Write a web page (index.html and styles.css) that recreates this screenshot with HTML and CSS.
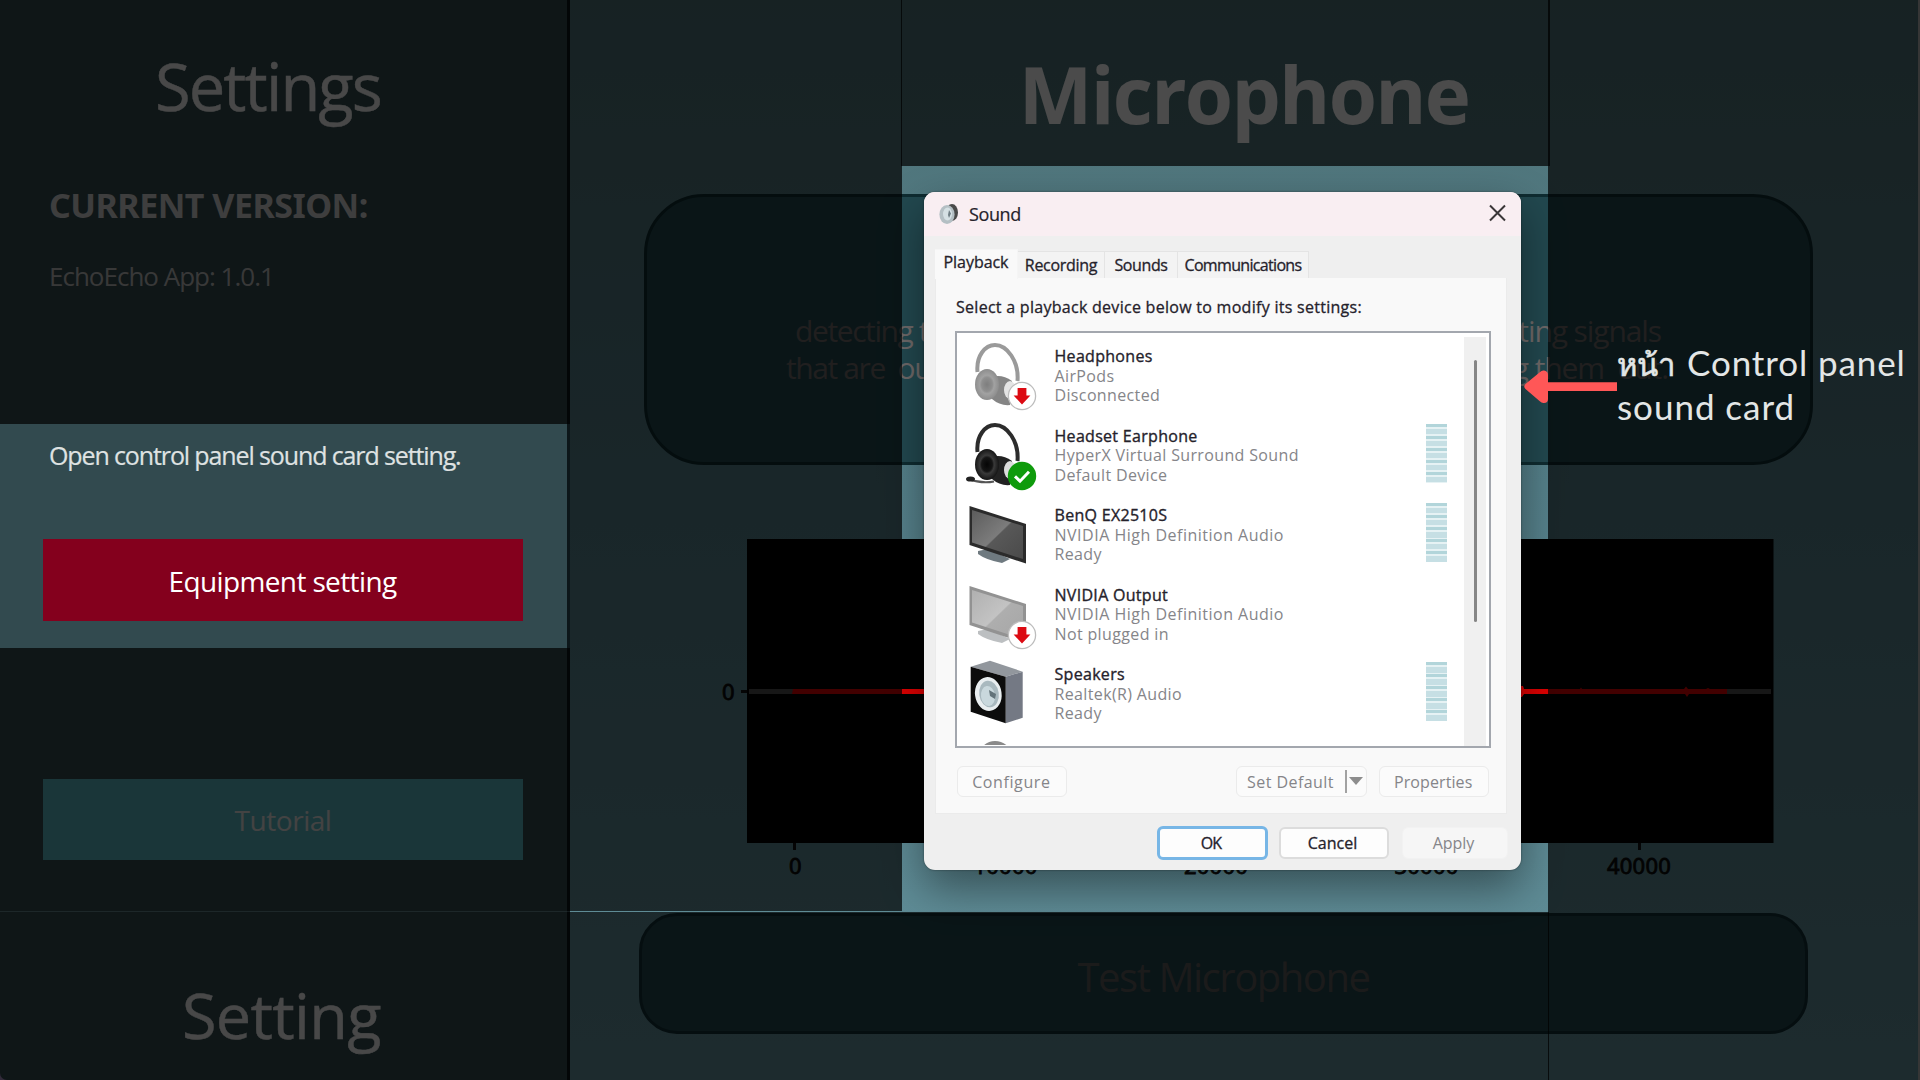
FILE: index.html
```html
<!DOCTYPE html>
<html lang="en">
<head>
<meta charset="utf-8">
<title>EchoEcho – Settings</title>
<link rel="stylesheet" href="styles.css">
</head>
<body>
<svg class="defs" width="0" height="0" aria-hidden="true">
  <defs>
    <linearGradient id="screenDark" x1="0" y1="0" x2="1" y2="1"><stop offset="0" stop-color="#5c5c5c"/><stop offset=".5" stop-color="#7c7c7c"/><stop offset=".52" stop-color="#585858"/><stop offset="1" stop-color="#4a4a4a"/></linearGradient>
    <linearGradient id="screenLight" x1="0" y1="0" x2="1" y2="1"><stop offset="0" stop-color="#b0b0b0"/><stop offset=".5" stop-color="#c3c3c3"/><stop offset=".52" stop-color="#aeaeae"/><stop offset="1" stop-color="#a6a6a6"/></linearGradient>
    <radialGradient id="cupLight"><stop offset="0" stop-color="#7e7e7e"/><stop offset=".45" stop-color="#8f8f8f"/><stop offset=".6" stop-color="#a2a2a2"/><stop offset="1" stop-color="#8d8d8d"/></radialGradient>
    <radialGradient id="cupDark"><stop offset="0" stop-color="#050505"/><stop offset=".45" stop-color="#151515"/><stop offset=".6" stop-color="#3a3a3a"/><stop offset="1" stop-color="#151515"/></radialGradient>
    <symbol id="down" viewBox="0 0 30 30"><circle cx="15" cy="15" r="13.6" fill="#fff" stroke="#bdbdbd" stroke-width="1.3"/><path d="M10.600 7h8.800v7.500h4L15 23.400 6.600 14.500h4z" fill="#dc0a12"/></symbol>
    <symbol id="check" viewBox="0 0 30 30"><circle cx="15" cy="15" r="14.2" fill="#0f9b0c"/><path d="M8 15.400l5 4.800 9-9.400" fill="none" stroke="#fff" stroke-width="3"/></symbol>
  </defs>
</svg>

<div class="app">
  <aside class="sidebar">
    <h1 class="side-title">Settings</h1>
    <h2 class="version-title">CURRENT VERSION:</h2>
    <p class="version">EchoEcho App: 1.0.1</p>
    <p class="hint">Open control panel sound card setting.</p>
    <button class="side-btn equipment">Equipment setting</button>
    <button class="side-btn tutorial">Tutorial</button>
    <div class="side-footer">Setting</div>
  </aside>

  <main class="main">
    <h1 class="page-title">Microphone</h1>
    <section class="about">
      <p class="about-line first"><span>detecting t</span><span class="tail">ting signals</span></p>
      <p class="about-line second"><span>that are  ou</span><span class="tail">ng them  out.</span></p>
    </section>
    <svg class="plot" width="1056" height="340" viewBox="718 539 1056 340">
      <rect x="747" y="539" width="1026.500" height="304" fill="#000"/>
      <rect x="741" y="690" width="6" height="3" fill="#111"/>
      <rect x="749" y="689" width="1022" height="5" fill="#4d4d4d"/>
      <path d="M793 689h727l1-3 2 0 1 3h56l1-1.500 1 1.500h102l2-2.500 2 2.500h18l2-1 2 1h17v5h-38l-2 3-2-3h-161l-2 3-2 0-1-3h-727z" fill="#de0000"/>
      <g fill="#111"><rect x="793" y="843" width="3" height="7"/><rect x="1638" y="843" width="3" height="7"/></g>
      <g class="ticks">
        <text x="728.500" y="700">0</text>
        <text x="795.500" y="873.500">0</text>
        <text x="1005.500" y="873.500">10000</text>
        <text x="1216" y="873.500">20000</text>
        <text x="1426.500" y="873.500">30000</text>
        <text x="1639" y="873.500">40000</text>
      </g>
    </svg>
    <button class="test-btn">Test Microphone</button>
  </main>
</div>

<div class="dialog">
  <header class="titlebar">
    <svg width="20" height="22" viewBox="0 0 20 22"><ellipse cx="13" cy="9.500" rx="6" ry="8.500" fill="#4a4a4a"/><ellipse cx="8" cy="11.500" rx="7.600" ry="9.500" fill="#b4bfc4"/><ellipse cx="8.500" cy="11" rx="4.500" ry="6.500" fill="#d5e0e4"/><path d="M10 7l2 3.500-2 4.500-1-3z" fill="#6e7c83"/></svg>
    <span class="title">Sound</span>
    <svg class="close" width="17" height="18" viewBox="0 0 17 18"><path d="M1 1.500l15 15M16 1.500l-15 15" stroke="#3a3638" stroke-width="2" fill="none"/></svg>
  </header>
  <nav class="tabs">
    <span class="tab active">Playback</span><span class="tab rec">Recording</span><span class="tab snd">Sounds</span><span class="tab com">Communications</span>
  </nav>
  <section class="panel">
    <p class="prompt">Select a playback device below to modify its settings:</p>
    <div class="list">
      <ul class="devices">
        <li class="device">
          <svg class="icon" viewBox="0 0 75 79"><path d="M13.500 35C12 19 21 8 31 8c12 0 24 16 22.500 36" fill="none" stroke="#9a9a9a" stroke-width="4"/><path d="M28 40q10-3 20 4l-2 24q-10 1-18-6z" fill="#858585"/><ellipse cx="46" cy="53" rx="6" ry="9" fill="#e4e4e4"/><ellipse cx="23" cy="47.500" rx="12" ry="15.500" fill="url(#cupLight)"/><use href="#down" x="43" y="44" width="30" height="30"/></svg>
          <div class="text"><strong>Headphones</strong><span>AirPods</span><span>Disconnected</span></div>
        </li>
        <li class="device">
          <svg class="icon" viewBox="0 0 75 79"><path d="M13.500 35C12 19 21 8 31 8c12 0 24 16 22.500 36" fill="none" stroke="#2c2c2c" stroke-width="4"/><path d="M28 40q10-3 20 4l-2 24q-10 1-18-6z" fill="#222"/><ellipse cx="46" cy="53" rx="6" ry="9" fill="#dcdcdc"/><ellipse cx="23" cy="47.500" rx="12" ry="15.500" fill="url(#cupDark)"/><path d="M4 62q14 5 26 2.500" fill="none" stroke="#555" stroke-width="2"/><ellipse cx="6.500" cy="62" rx="4.500" ry="2.600" fill="#222"/><use href="#check" x="43" y="44" width="30" height="30"/></svg>
          <div class="text"><strong>Headset Earphone</strong><span>HyperX Virtual Surround Sound</span><span>Default Device</span></div>
          <div class="meter"></div>
        </li>
        <li class="device">
          <svg class="icon" viewBox="0 0 75 79"><path d="M14 55l10-2 22 10-8 4q-16-3-24-9z" fill="#6f7a80"/><path d="M5.500 10L62 28v39.500L5.500 49z" fill="#2b2b2b"/><path d="M8 14l51 16v33L8 46.500z" fill="url(#screenDark)"/></svg>
          <div class="text"><strong>BenQ EX2510S</strong><span class="nv">NVIDIA High Definition Audio</span><span>Ready</span></div>
          <div class="meter"></div>
        </li>
        <li class="device">
          <svg class="icon" viewBox="0 0 75 79"><path d="M14 55l10-2 22 10-8 4q-16-3-24-9z" fill="#bcbfc1"/><path d="M5.500 10L62 28v39.500L5.500 49z" fill="#929292"/><path d="M8 14l51 16v33L8 46.500z" fill="url(#screenLight)"/><use href="#down" x="43" y="44" width="30" height="30"/></svg>
          <div class="text"><strong>NVIDIA Output</strong><span class="nv">NVIDIA High Definition Audio</span><span>Not plugged in</span></div>
        </li>
        <li class="device">
          <svg class="icon" viewBox="0 0 75 79"><path d="M6.700 11.700L26 5.700l32.700 11-17 5z" fill="#92979d"/><path d="M41.700 21.700l17-5v46l-17 5.600z" fill="#747984"/><path d="M6.700 11.700l35 10v46.600l-35-11.600z" fill="#0c0c0c"/><ellipse cx="24.300" cy="39" rx="13.300" ry="17" transform="rotate(-8 24.300 39)" fill="#e9eef0"/><ellipse cx="25" cy="39" rx="9.800" ry="13.400" transform="rotate(-8 25 39)" fill="#a9b9bf"/><ellipse cx="24" cy="41" rx="7" ry="10" transform="rotate(-8 24 41)" fill="#c9d8dd"/><path d="M25 35l7 4-1 5-5-3z" fill="#63737a"/></svg>
          <div class="text"><strong>Speakers</strong><span>Realtek(R) Audio</span><span>Ready</span></div>
          <div class="meter"></div>
        </li>
        <li class="device">
          <svg class="icon" viewBox="0 0 75 79"><path d="M13.500 35C12 19 21 8 31 8c12 0 24 16 22.500 36" fill="none" stroke="#8a8a8a" stroke-width="4"/></svg>
        </li>
      </ul>
      <div class="scrollbar"><div class="thumb"></div></div>
    </div>
    <div class="actions">
      <span class="btn configure">Configure</span>
      <span class="btn default">Set Default<i class="divider"></i><i class="arrow"></i></span>
      <span class="btn props">Properties</span>
    </div>
  </section>
  <footer class="footer">
    <span class="btn ok">OK</span><span class="btn cancel">Cancel</span><span class="btn apply">Apply</span>
  </footer>
</div>

<div class="shade side-top"></div>
<div class="shade side-mid"></div>
<div class="shade side-bottom"></div>
<div class="shade gap-col"></div>
<div class="shade gap-bottom"></div>
<div class="shade head"></div>
<div class="shade foot"></div>
<div class="shade right-col"></div>

<svg class="pointer" width="96" height="34" viewBox="0 0 96 34"><path d="M94 12.300H25V5Q25 1 21 .500Q19 0 16.500 2.500L2.500 14Q0 16.500 2.500 19L16.500 31Q19 33.500 21 33Q25 33 25 29V21H94z" fill="#ff5757"/></svg>
<p class="caption"><span class="thai" lang="th">หน้า</span> <span class="cp">Control panel</span><br><span class="sc">sound card</span></p>
</body>
</html>
```
FILE: styles.css
```css
* { box-sizing: border-box; margin: 0; padding: 0; }

body {
  position: relative;
  width: 1920px;
  height: 1080px;
  overflow: hidden;
  background: #a98fc4;
  font-family: "Open Sans", "Noto Sans", sans-serif;
}

button { border: 0; font-family: inherit; }
.defs { position: absolute; }

.app { display: flex; height: 1080px; }

/* Sidebar */
.sidebar {
  display: flex;
  flex-direction: column;
  width: 570px;
  padding-top: 46px;
  background: #324a4f;
  border-right: 3px solid #0c1619;
  border-bottom-left-radius: 7px;
  color: #fff;
}
.side-title { margin-left: 155px; font-size: 65px; font-weight: 400; line-height: 80px; letter-spacing: -1.9px; color: #f0f0f0; -webkit-text-stroke: .4px; }
.version-title { margin: 59px 0 0 49px; font: 700 34px/40px "Noto Sans", sans-serif; letter-spacing: -.5px; color: #cfcfcf; }
.version { margin: 35px 0 0 49px; font-size: 26px; line-height: 32px; letter-spacing: -1px; color: #bdbdbd; }
.hint { margin: 147px 0 0 49px; font-size: 25px; line-height: 32px; letter-spacing: -1.12px; color: #dfe2e2; white-space: nowrap; -webkit-text-stroke: .2px; }
.side-btn { width: 480px; height: 81px; margin-left: 43px; font-size: 28px; line-height: 81px; letter-spacing: -.62px; color: #fff; }
.equipment { margin-top: 68px; height: 82px; padding: 2px 1px 0 0; background: #84001d; }
.tutorial { margin-top: 158px; background: #59b5be; color: #e0e0e0; letter-spacing: -.45px; padding-top: 1px; }
.side-footer { margin: 115px 0 0 182px; font-size: 63px; line-height: 80px; letter-spacing: -.7px; color: #f0f0f0; -webkit-text-stroke: .4px; }

/* Main */
.main {
  display: flex;
  flex: 1;
  flex-direction: column;
  padding-top: 44px;
  background: linear-gradient(#4e7277, #55808a 45%, #62909a);
  border-right: 2px solid #b4b4b4;
}
.page-title { font-size: 78px; line-height: 100px; letter-spacing: -1.7px; text-align: center; color: #fafafa; }
.about {
  width: 1169px;
  height: 271px;
  margin: 50px 0 0 74px;
  padding-top: 116px;
  background: #22484f;
  border: 3px solid #0f2c31;
  border-radius: 60px;
  color: #6e6969;
}
.about-line { display: flex; justify-content: space-between; font-size: 30px; line-height: 36px; letter-spacing: -1.4px; white-space: pre; }
.tail { letter-spacing: -1.1px; }
.first { margin: 0 149px 0 148px; }
.second { margin: 0 142px 0 139px; padding-top: 1px; }
.plot { margin: 74px 0 0 148px; }
.ticks { font: 22px "Noto Sans", sans-serif; letter-spacing: .2px; text-anchor: middle; fill: #0a0a0a; stroke: #0a0a0a; stroke-width: .8px; }
.test-btn {
  width: 1169px;
  height: 121px;
  margin: 34px 0 0 69px;
  padding-top: 5px;
  background: #22474e;
  border: 3px solid #123036;
  border-radius: 38px;
  font-size: 40px;
  letter-spacing: -1.46px;
  color: #5d5a5a;
}

/* Sound dialog */
.dialog {
  position: absolute;
  top: 192px;
  left: 924px;
  width: 597px;
  height: 678px;
  background: #efefef;
  border-radius: 11px;
  box-shadow: 0 0 2px rgba(0,0,0,.5), 0 18px 44px rgba(0,0,0,.42);
  font-size: 16px;
  color: #25222b;
}
.titlebar { display: flex; align-items: center; height: 44px; padding: 0 15px; background: #f9eef2; border-radius: 11px 11px 0 0; }
.title { margin-left: 10px; font-size: 18px; line-height: 24px; letter-spacing: -.4px; -webkit-text-stroke: .2px; }
.close { margin-left: auto; margin-bottom: 3px; }
.tabs { display: flex; align-items: flex-end; height: 42px; padding-left: 11px; }
.tab { height: 27px; border: 1px solid #e4e4e4; border-width: 1px 1px 0 0; background: #f3f3f3; line-height: 26px; text-align: center; -webkit-text-stroke: .3px; }
.active { width: 83px; height: 30px; margin-bottom: -1px; background: #f9f9f9; border-color: #f5f5f5; line-height: 24px; letter-spacing: -.05px; }
.rec { width: 87px; letter-spacing: -.3px; }
.snd { width: 73px; letter-spacing: -.4px; }
.com { width: 131px; letter-spacing: -.67px; }
.panel { height: 536px; margin: 0 14px 0 11px; padding: 19px 17px 0 20px; background: #f9f9f9; border: 1px solid #ebebeb; border-top: 0; }
.prompt { line-height: 20px; letter-spacing: .28px; white-space: nowrap; -webkit-text-stroke: .3px; }
.list { display: flex; width: 536px; height: 417px; margin: 14px 0 0 -1px; padding: 4px 2px 1px 0; background: #fff; border: 2px solid #a3a7ae; overflow: hidden; }
.devices { width: 507px; height: 408px; list-style: none; overflow: hidden; }
.device { display: flex; height: 79.5px; padding-left: 7px; }
.icon { flex: none; width: 75px; height: 79px; }
.text { display: flex; flex-direction: column; padding: 10px 0 0 15.500px; line-height: 19.7px; letter-spacing: .36px; color: #858589; white-space: nowrap; }
.text strong { font-weight: 400; letter-spacing: .3px; color: #25222b; -webkit-text-stroke: .35px; }
.text .nv { letter-spacing: .5px; }
.meter { width: 21.5px; height: 59px; margin: 7px 17px 0 auto; background: repeating-linear-gradient(#b2d5da 0 3px, #e6f2f4 3px 5px, #c6dfe4 5px 10.500px, #e6f2f4 10.500px 12px); }
.scrollbar { width: 22px; height: 409px; background: #f0f0f0; }
.thumb { width: 3px; height: 262px; margin: 23px 0 0 10px; background: #868686; border-radius: 2px; }
.actions { display: flex; margin-top: 18px; }
.btn { display: flex; align-items: center; justify-content: center; height: 31px; background: #fbfbfb; border: 1.500px solid #ebebeb; border-radius: 6px; color: #858589; }
.configure { width: 110px; letter-spacing: .6px; margin-left: 1px; padding-right: 1px; }
.default { width: 132px; margin-left: 169px; letter-spacing: .45px; padding-left: 7px; }
.divider { width: 2px; height: 23px; margin-left: 11px; background: #a2a2a2; }
.arrow { margin: 0 0 2px 2px; border: 7px solid transparent; border-top: 8px solid #8d8d8d; border-bottom: 0; }
.props { width: 110px; margin-left: 12px; letter-spacing: .1px; padding-right: 2px; }
.footer { display: flex; justify-content: flex-end; align-items: center; padding: 12px 13px 0 0; }
.footer .btn { height: 32px; background: #fdfdfd; padding-right: 3px; }
.footer .ok { width: 111px; height: 34px; border: 3px solid #77b6e6; color: #25222b; letter-spacing: -.8px; -webkit-text-stroke: .3px; }
.footer .cancel { width: 110px; margin: 0 13px 0 11px; border: 2px solid #dcdcdc; color: #25222b; -webkit-text-stroke: .3px; }
.footer .apply { width: 106px; background: #f6f6f6; border-color: #f2f2f2; }

/* Dimmed areas around the highlighted steps */
.shade { position: absolute; background: rgba(0,0,0,.7); }
.side-top { left: 0; top: 0; width: 570px; height: 424px; }
.side-mid { left: 0; top: 648px; width: 570px; height: 263px; }
.side-bottom { left: 0; top: 911px; width: 570px; height: 169px; border-top: 1px solid rgba(70,90,95,.25); }
.gap-col { left: 570px; top: 0; width: 332px; height: 911px; }
.gap-bottom { left: 570px; top: 912px; width: 332px; height: 168px; }
.head { left: 901px; top: 0; width: 649px; height: 166px; }
.foot { left: 902px; top: 912px; width: 647px; height: 168px; }
.right-col { left: 1548px; top: 0; width: 372px; height: 1080px; }

/* Callout */
.pointer { position: absolute; left: 1523px; top: 370px; }
.caption { position: absolute; left: 1617px; top: 341px; font: 35px/43.5px Lato, "Open Sans", sans-serif; color: #e3e6e6; white-space: nowrap; }
.thai { display: inline-block; width: 61px; font-size: 31px; line-height: 30px; -webkit-text-stroke: .6px; }
.cp { letter-spacing: .9px; }
.sc { letter-spacing: .96px; }
```
